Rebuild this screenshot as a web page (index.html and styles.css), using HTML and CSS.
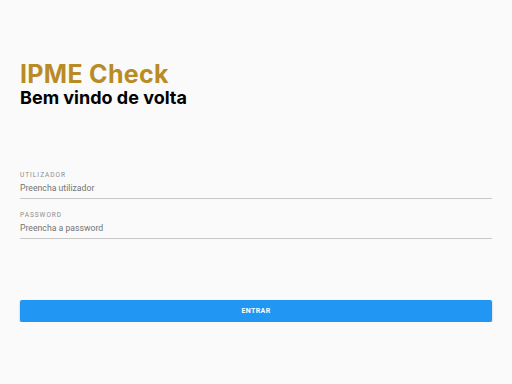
FILE: index.html
```html
<!DOCTYPE html>
<html lang="pt">

<head>
    <meta charset="UTF-8" />
    <meta name="viewport" content="width=device-width, initial-scale=1.0" />
    <title>IPME Check</title>
    <link rel="stylesheet" href="styles.css">
</head>

<body>
    <div class="pagina">
        <div class="cabecalho">
            <h1>IPME Check</h1>
            <h2>Bem vindo de volta</h2>
        </div>
        <form class="formulario">
            <div class="campo">
                <label for="iUtilizador">Utilizador</label>
                <input type="text" id="iUtilizador" placeholder="Preencha utilizador" />
            </div>
            <div class="campo">
                <label for="iPassword">Password</label>
                <input type="password" id="iPassword" placeholder="Preencha a password" />
            </div>
            <button type="button" class="entrar">Entrar</button>
        </form>
    </div>
</body>

</html>
```

FILE: styles.css
```css
* {
    box-sizing: border-box;
    margin: 0;
    padding: 0;
}

body {
    background-color: #fafafa;
    font-family: Inter, "Liberation Sans", sans-serif;
    color: #000;
}

.pagina {
    padding: 60px 20px 0 20px;
}

h1 {
    color: #b98b25;
    font-size: 25px;
    font-weight: 700;
    line-height: 28px;
    letter-spacing: 0.3px;
}

h2 {
    font-size: 18px;
    font-weight: 700;
    line-height: 20px;
}

.formulario {
    margin-top: 62px;
    display: flex;
    flex-direction: column;
}

.campo {
    display: flex;
    flex-direction: column;
    border-bottom: 1px solid #c8c8c8;
    margin-bottom: 11px;
}

.campo label {
    font-family: Roboto, "Liberation Sans", sans-serif;
    font-size: 6.5px;
    text-transform: uppercase;
    letter-spacing: 1px;
    color: #8c8c8c;
    line-height: 10px;
}

.campo input {
    border: none;
    background: transparent;
    font-family: Roboto, "Liberation Sans", sans-serif;
    font-size: 8.7px;
    color: #000;
    height: 18px;
    padding: 0 0 3px 0;
    outline: none;
}

.campo input::placeholder {
    color: #757575;
}

.entrar {
    margin-top: 50px;
    height: 22px;
    background-color: #2196f3;
    color: #fff;
    border: none;
    border-radius: 2px;
    font-family: Roboto, "Liberation Sans", sans-serif;
    font-size: 7px;
    font-weight: 700;
    text-transform: uppercase;
    letter-spacing: 0.4px;
    box-shadow: 0 1px 2px rgba(0, 0, 0, 0.3);
}
```
